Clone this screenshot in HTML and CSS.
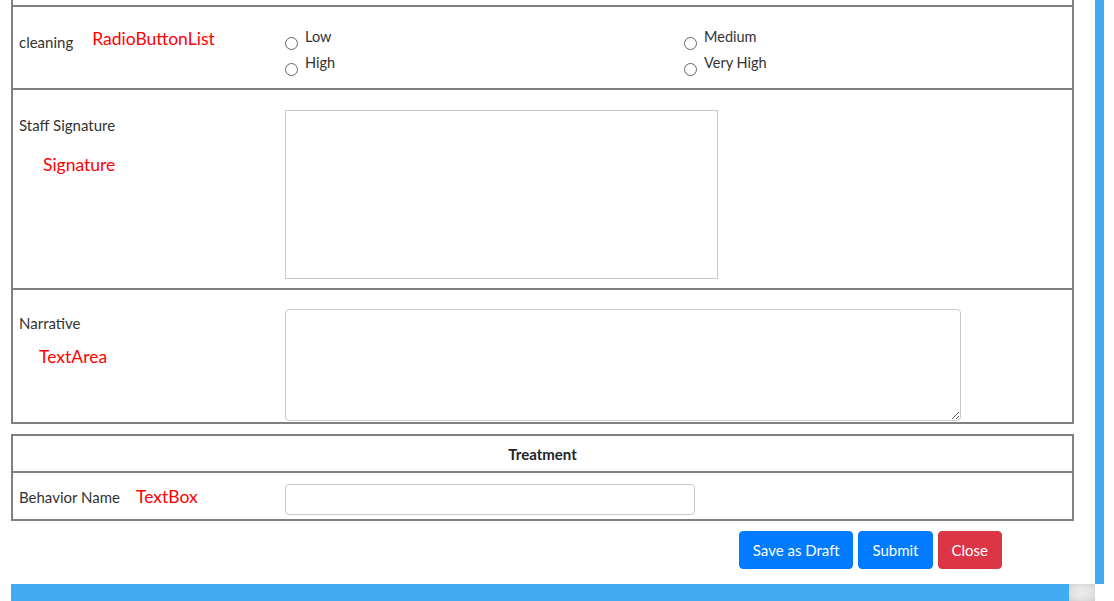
FILE: index.html
```html
<!DOCTYPE html>
<html lang="en">
<head>
<meta charset="utf-8">
<title>Form</title>
<link rel="stylesheet" href="styles.css">
</head>
<body>
<div class="screen">
  <div class="page">
    <div class="form-box">
      <div class="top-stub"></div>
      <div class="row row-cleaning">
        <div class="label label-inline">cleaning <span class="note note-radio">RadioButtonList</span></div>
        <div class="field">
          <div class="radio-grid">
            <label class="radio-item"><input type="radio" name="cleaning"><span>Low</span></label>
            <label class="radio-item"><input type="radio" name="cleaning"><span>Medium</span></label>
            <label class="radio-item"><input type="radio" name="cleaning"><span>High</span></label>
            <label class="radio-item"><input type="radio" name="cleaning"><span>Very High</span></label>
          </div>
        </div>
      </div>
      <div class="row row-sign">
        <div class="label">
          <div>Staff Signature</div>
          <div class="note note-sign">Signature</div>
        </div>
        <div class="field">
          <div class="sign-pad"></div>
        </div>
      </div>
      <div class="row row-narr">
        <div class="label label-narr">
          <div>Narrative</div>
          <div class="note note-area">TextArea</div>
        </div>
        <div class="field">
          <textarea class="narrative"></textarea>
        </div>
      </div>
    </div>

    <div class="form-box treatment">
      <div class="th">Treatment</div>
      <div class="row row-behavior">
        <div class="label label-inline label-behavior">Behavior Name <span class="note note-box">TextBox</span></div>
        <div class="field field-behavior">
          <input type="text" class="text-input">
        </div>
      </div>
    </div>

    <div class="actions">
      <button class="btn btn-primary btn-draft">Save as Draft</button>
      <button class="btn btn-primary btn-submit">Submit</button>
      <button class="btn btn-danger btn-close">Close</button>
    </div>
  </div>
  <div class="vscroll"></div>
  <div class="hscroll">
    <div class="hgap"></div>
    <div class="hthumb"></div>
    <div class="corner"></div>
  </div>
</div>
</body>
</html>
```

FILE: styles.css
```css
* { box-sizing: border-box; }

html, body {
  margin: 0;
  padding: 0;
  background: #fff;
}

body {
  font-family: Lato, "Liberation Sans", sans-serif;
  color: #333;
  font-size: 15px;
  line-height: 20px;
}

.screen {
  display: grid;
  grid-template-columns: 1095px 9px 1fr;
  grid-template-rows: 584px 17px;
  width: 1114px;
  height: 601px;
  overflow: hidden;
}

.page {
  grid-column: 1;
  grid-row: 1;
  padding-left: 11px;
  overflow: hidden;
}

.vscroll {
  grid-column: 2;
  grid-row: 1;
  background: #42acf3;
}

.hscroll {
  grid-column: 1 / 3;
  grid-row: 2;
  display: flex;
}

.hgap { width: 11px; background: #fff; }
.hthumb { width: 1058px; background: #42acf3; }
.corner {
  width: 26px;
  background: radial-gradient(ellipse at center, #ececec 0%, #e2e2e2 55%, #cfcfcf 100%);
}

.form-box {
  width: 1063px;
  border-left: 2px solid #808080;
  border-right: 2px solid #808080;
  border-bottom: 2px solid #808080;
}

.top-stub { height: 5px; }

.row {
  display: grid;
  grid-template-columns: 272px 1fr;
  border-top: 2px solid #808080;
}

.label {
  padding-left: 6px;
  padding-top: 25px;
}

.label-inline {
  display: flex;
  align-items: flex-start;
}

.note {
  font-size: 17.5px;
  font-weight: 400;
  color: #ff0000;
  line-height: 20px;
}

.note-radio { margin-left: 19px; margin-top: -3px; }
.note-sign { margin-left: 24px; margin-top: 20px; }
.note-area { margin-left: 20px; margin-top: 14px; }
.note-box { margin-left: 16px; margin-top: 0; }

.field { padding-top: 20px; }

/* cleaning row */
.row-cleaning { height: 83px; }

.radio-grid {
  display: grid;
  grid-template-columns: 399px 1fr;
  row-gap: 6px;
}

.radio-item {
  display: flex;
  align-items: flex-start;
  height: 20px;
  font-size: 14.5px;
  line-height: 20px;
  color: #333;
}

.radio-item input {
  -webkit-appearance: none;
  appearance: none;
  flex: none;
  width: 13px;
  height: 13px;
  margin: 10px 7px 0 0;
  border: 1px solid #666;
  border-radius: 50%;
  background: #fff;
}

/* signature row */
.row-sign { height: 200px; }

.sign-pad {
  width: 433px;
  height: 169px;
  border: 1px solid #c8c8c8;
}

/* narrative row */
.row-narr { height: 134px; }
.label-narr { padding-top: 23px; }
.row-narr .field { padding-top: 19px; }

.narrative {
  display: block;
  width: 676px;
  height: 112px;
  margin: 0;
  border: 1px solid #c8c8c8;
  border-radius: 4px;
  font: inherit;
}

/* treatment */
.treatment { margin-top: 10px; border-top: 2px solid #808080; }

.th {
  height: 35px;
  line-height: 37px;
  text-align: center;
  font-weight: bold;
  font-size: 15px;
  color: #212529;
}

.row-behavior { height: 48px; }
.label-behavior { padding-top: 14px; }
.field-behavior { padding-top: 11px; }

.text-input {
  display: block;
  width: 410px;
  height: 31px;
  margin: 0;
  border: 1px solid #c8c8c8;
  border-radius: 4px;
  font: inherit;
}

/* actions */
.actions {
  width: 1063px;
  margin-top: 10px;
  padding-right: 72px;
  display: flex;
  justify-content: flex-end;
  gap: 5px;
}

.btn {
  height: 38px;
  padding: 0 13px;
  border: 1px solid transparent;
  border-radius: 4px;
  color: #fff;
  font-family: Lato, "Liberation Sans", sans-serif;
  font-size: 15px;
}

.btn-primary { background: #007bff; border-color: #007bff; }
.btn-danger { background: #dc3545; border-color: #dc3545; }
```
